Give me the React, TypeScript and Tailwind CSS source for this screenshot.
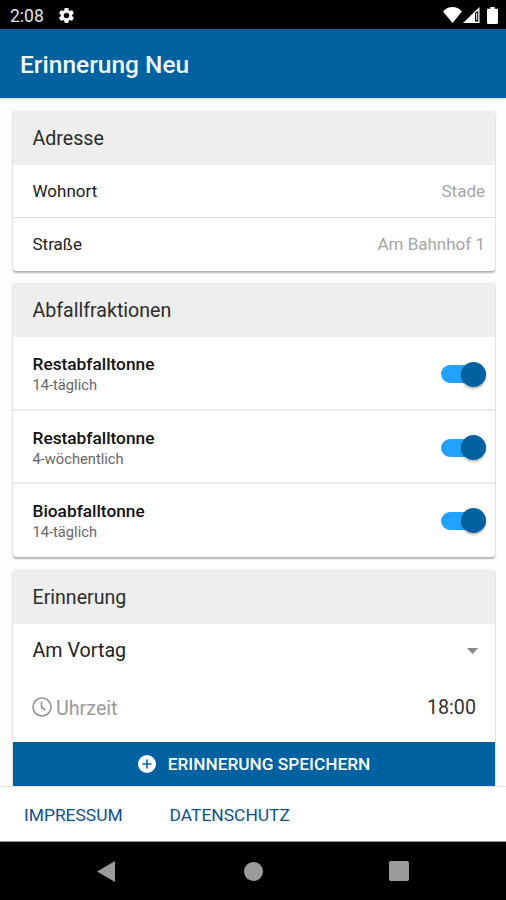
import { useState } from "react";
import type { ReactNode } from "react";

interface Fraction {
  id: number;
  name: string;
  interval: string;
}

const fractions: Fraction[] = [
  { id: 1, name: "Restabfalltonne", interval: "14-täglich" },
  { id: 2, name: "Restabfalltonne", interval: "4-wöchentlich" },
  { id: 3, name: "Bioabfalltonne", interval: "14-täglich" },
];

function StatusBar() {
  return (
    <div className="flex h-[29px] shrink-0 items-center bg-black pr-[8px] pl-[10px] text-white">
      <span className="pt-[4px] text-[17.5px] leading-none text-[#e4e4e4]">2:08</span>
      <svg className="mt-[2px] ml-[13px] h-[19px] w-[19px]" viewBox="0 0 24 24" fill="currentColor">
        <path d="M19.14 12.94c.04-.3.06-.61.06-.94 0-.32-.02-.64-.07-.94l2.03-1.58c.18-.14.23-.41.12-.61l-1.92-3.32c-.12-.22-.37-.29-.59-.22l-2.39.96c-.5-.38-1.03-.7-1.62-.94l-.36-2.54c-.04-.24-.24-.41-.48-.41h-3.84c-.24 0-.43.17-.47.41l-.36 2.54c-.59.24-1.13.57-1.62.94l-2.39-.96c-.22-.08-.47 0-.59.22L2.74 8.87c-.12.21-.08.47.12.61l2.03 1.58c-.05.3-.09.63-.09.94s.02.64.07.94l-2.03 1.58c-.18.14-.23.41-.12.61l1.92 3.32c.12.22.37.29.59.22l2.39-.96c.5.38 1.03.7 1.62.94l.36 2.54c.05.24.24.41.48.41h3.84c.24 0 .44-.17.47-.41l.36-2.54c.59-.24 1.13-.56 1.62-.94l2.39.96c.22.08.47 0 .59-.22l1.92-3.32c.12-.22.07-.47-.12-.61l-2.01-1.58zM12 15.6c-1.98 0-3.6-1.62-3.6-3.6s1.62-3.6 3.6-3.6 3.6 1.62 3.6 3.6-1.62 3.6-3.6 3.6z" />
      </svg>
      <div className="ml-auto flex items-center pt-px">
        <svg className="h-[16px] w-[19px]" viewBox="0 0 19 16" fill="currentColor">
          <path d="M9.5 16 0 4.4C2.6 1.6 6 .1 9.5.1S16.4 1.6 19 4.4z" />
        </svg>
        <svg className="ml-px h-[16px] w-[17px]" viewBox="0 0 17 16" fill="currentColor">
          <path fillRule="evenodd" d="M16.5 0v16H0zM12 6v8.5h3.2V3.8z" />
          <path d="M13.2 6h1v7h-1z" />
        </svg>
        <svg className="ml-[7px] h-[17px] w-[11px]" viewBox="0 0 11 17" fill="currentColor">
          <path d="M3.3 0h4.4v1.8h2.1c.7 0 1.2.5 1.2 1.2v12.8c0 .7-.5 1.2-1.2 1.2H1.2C.5 17 0 16.5 0 15.8V3c0-.7.5-1.2 1.2-1.2h2.1z" />
        </svg>
      </div>
    </div>
  );
}

function Card({ title, children }: { title: string; children: ReactNode }) {
  return (
    <section className="mr-[11px] ml-[13px] shrink-0 overflow-hidden rounded-[3px] bg-white shadow-[0_2px_2px_rgba(0,0,0,0.28),0_0_2px_rgba(0,0,0,0.14)] last:mt-px">
      <h2 className="flex h-[54px] items-center bg-[#eeeeee] pt-px pl-[19.5px] text-[19.6px] text-[#2c2c2c]">
        {title}
      </h2>
      {children}
    </section>
  );
}

function AddressRow({ label, value }: { label: string; value: string }) {
  return (
    <div className="flex h-[53px] items-center justify-between pt-[2px] pr-[10px] pl-[19.5px] text-[17px] last:pt-0">
      <span className="text-[#202020]">{label}</span>
      <span className="text-[#a6a6a6]">{value}</span>
    </div>
  );
}

function Toggle({ on, onChange }: { on: boolean; onChange: () => void }) {
  return (
    <button
      type="button"
      role="switch"
      aria-checked={on}
      onClick={onChange}
      className={`flex h-[18px] w-[45px] items-center rounded-full ${
        on ? "justify-end bg-[#22a2ff]" : "justify-start bg-[#bdbdbd]"
      }`}
    >
      <span
        className={`h-[25px] w-[25px] rounded-full shadow-[0_2px_2px_rgba(0,0,0,0.25)] ${
          on ? "bg-[#0061a1]" : "bg-white"
        }`}
      />
    </button>
  );
}

function ReminderForm() {
  return (
    <>
      <div className="flex h-[54px] items-center justify-between pr-[17px] pl-[19.5px] text-[19.7px] text-[#222222]">
        <span>Am Vortag</span>
        <svg className="h-[6px] w-[11px] text-[#888888]" viewBox="0 0 11 6" fill="currentColor">
          <path d="M0 0h11L5.5 6z" />
        </svg>
      </div>
      <div className="flex h-[64px] items-center pr-[19px] pb-[4px] pl-[19px] text-[19.7px]">
        <svg
          className="mb-[2px] h-[20px] w-[20px] text-[#8e8e8e]"
          viewBox="0 0 20 20"
          fill="none"
          stroke="currentColor"
          strokeWidth={1.5}
        >
          <circle cx="10" cy="10" r="9" />
          <path d="M9.5 4.5v6l4 2.5" />
        </svg>
        <span className="ml-[4px] pt-[2px] text-[#999999]">Uhrzeit</span>
        <span className="ml-auto text-[#333333]">18:00</span>
      </div>
      <button
        type="button"
        className="flex h-[50px] w-full items-center justify-center bg-[#0061a1] pb-[6px] text-[17.25px] font-medium text-white"
      >
        <svg className="mr-[12px] h-[18px] w-[18px]" viewBox="0 0 18 18">
          <circle cx="9" cy="9" r="9" fill="currentColor" />
          <path d="M9 4.5v9M4.5 9h9" stroke="#0061a1" strokeWidth={1.6} />
        </svg>
        <span className="pt-px">ERINNERUNG SPEICHERN</span>
      </button>
    </>
  );
}

function NavigationBar() {
  return (
    <div className="flex h-[58px] shrink-0 items-center bg-black pl-[97px] text-[#9b9b9b]">
      <svg className="h-[21px] w-[18px]" viewBox="0 0 18 21" fill="currentColor">
        <path d="M18 0v21L0 10.5z" />
      </svg>
      <span className="ml-[129px] h-[19px] w-[19px] rounded-full bg-[#9b9b9b]" />
      <span className="ml-[126px] h-[20px] w-[20px] rounded-[2px] bg-[#9b9b9b]" />
    </div>
  );
}

export default function App() {
  const [enabled, setEnabled] = useState<Record<number, boolean>>({ 1: true, 2: true, 3: true });

  const toggle = (id: number) => {
    setEnabled((prev) => ({ ...prev, [id]: !prev[id] }));
  };

  return (
    <div className="flex h-[900px] w-[506px] flex-col overflow-hidden bg-[#fdfdfd] font-[Roboto,sans-serif]">
      <StatusBar />
      <header className="z-10 flex h-[69px] shrink-0 items-center bg-[#0061a1] pt-[4px] pl-[20px] shadow-[0_1px_2px_rgba(0,0,0,0.2)]">
        <h1 className="text-[24.5px] font-medium text-[#f4f8fc]">Erinnerung Neu</h1>
      </header>

      <main className="flex min-h-0 flex-1 flex-col gap-[12px] overflow-hidden pt-[13px]">
        <Card title="Adresse">
          <div className="divide-y divide-[#dddddd]">
            <AddressRow label="Wohnort" value="Stade" />
            <AddressRow label="Straße" value="Am Bahnhof 1" />
          </div>
        </Card>

        <Card title="Abfallfraktionen">
          <div className="divide-y-2 divide-[#ececec]">
            {fractions.map((f) => (
              <div
                key={f.id}
                className="flex h-[73px] items-center justify-between pt-[2px] pr-[9px] pl-[19.5px] first:h-[74px] last:pt-0"
              >
                <div className="pt-[2px]">
                  <div className="text-[17.3px] leading-[21px] font-medium text-[#111111]">{f.name}</div>
                  <div className="text-[14.7px] leading-[21px] text-[#666666]">{f.interval}</div>
                </div>
                <Toggle on={enabled[f.id]} onChange={() => toggle(f.id)} />
              </div>
            ))}
          </div>
        </Card>

        <Card title="Erinnerung">
          <ReminderForm />
        </Card>
      </main>

      <footer className="z-10 flex h-[56px] shrink-0 items-center border-t border-b border-t-[#e2e2e2] border-b-[#999999] bg-white pt-[3px] pl-[24px] text-[17.4px] text-[#0d4f94]">
        <a href="#impressum">IMPRESSUM</a>
        <a href="#datenschutz" className="ml-[47px]">
          DATENSCHUTZ
        </a>
      </footer>
      <NavigationBar />
    </div>
  );
}
